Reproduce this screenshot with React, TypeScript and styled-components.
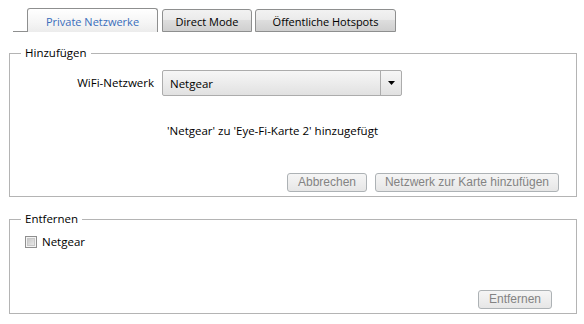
import React from "react";
import styled, { createGlobalStyle } from "styled-components";

const Global = createGlobalStyle`
  html, body { margin: 0; padding: 0; background: #ffffff; }
  body { width: 584px; height: 324px; overflow: hidden; font-family: "Open Sans", "Noto Sans", sans-serif; }
`;

const Page = styled.div`
  width: 584px;
  height: 324px;
  box-sizing: border-box;
  padding: 8px 7px 0 9px;
  display: flex;
  flex-direction: column;
  font-size: 11.5px;
  color: #000;
`;

const TabStrip = styled.div`
  display: flex;
  align-items: flex-end;
  height: 24px;
  padding-left: 4px;
  font-size: 11px;
`;

const TabLead = styled.div`
  width: 14px;
  height: 0;
  border-bottom: 1px solid #8e8f8f;
`;

const Tab = styled.div<{ $active?: boolean; $w: number }>`
  box-sizing: border-box;
  width: ${(p) => p.$w}px;
  height: ${(p) => (p.$active ? 24 : 23)}px;
  margin-right: ${(p) => (p.$active ? 4 : 3)}px;
  border: 1px solid #8e8f8f;
  border-bottom: ${(p) => (p.$active ? "none" : "1px solid #8e8f8f")};
  border-radius: 3px 3px 0 0;
  background: ${(p) =>
    p.$active
      ? "linear-gradient(#ffffff, #f5f5f5 60%, #ececec)"
      : "linear-gradient(#f2f2f2, #ebebeb 45%, #dddddd 50%, #cfcfcf)"};
  color: ${(p) => (p.$active ? "#3a6dbb" : "#000")};
  display: flex;
  align-items: center;
  justify-content: center;
  padding-top: ${(p) => (p.$active ? 2 : 1)}px;
  white-space: nowrap;
  overflow: hidden;
`;

const Group = styled.fieldset<{ $mt: number; $pb: number }>`
  margin: ${(p) => p.$mt}px 0 0 0;
  padding: 0 0 ${(p) => p.$pb}px 0;
  border: 1px solid #b4b4b4;
  min-width: 0;
  display: flex;
  flex-direction: column;
`;

const Legend = styled.legend`
  margin-left: 11px;
  padding: 0 4px;
  line-height: 16px;
  height: 16px;
`;

const FieldRow = styled.div`
  display: flex;
  align-items: center;
  margin-top: 9px;
  gap: 8px;
`;

const Label = styled.span`
  width: 144px;
  text-align: right;
  line-height: 16px;
`;

const Select = styled.div`
  box-sizing: border-box;
  width: 240px;
  height: 26px;
  border: 1px solid #acacac;
  border-radius: 2px;
  background: linear-gradient(#f6f6f6, #ececec 50%, #e1e1e1);
  display: flex;
  align-items: stretch;
`;

const SelectValue = styled.div`
  flex: 1;
  display: flex;
  align-items: center;
  padding-left: 7px;
  padding-top: 1px;
`;

const SelectArrow = styled.div`
  box-sizing: border-box;
  width: 21px;
  border-left: 1px solid #acacac;
  display: flex;
  align-items: center;
  justify-content: center;
`;

const Message = styled.div`
  margin-top: 27px;
  padding-left: 157px;
  line-height: 16px;
`;

const ButtonRow = styled.div<{ $mt: number; $pr: number }>`
  display: flex;
  justify-content: flex-end;
  gap: 8px;
  margin-top: ${(p) => p.$mt}px;
  padding-right: ${(p) => p.$pr}px;
`;

const Button = styled.button<{ $w: number }>`
  box-sizing: border-box;
  width: ${(p) => p.$w}px;
  height: 19px;
  padding: 0;
  border: 1px solid #adb2b5;
  border-radius: 3px;
  background: linear-gradient(#f5f5f5, #eeeeee 50%, #e6e6e6);
  color: #838383;
  font-family: "Liberation Sans", Arial, sans-serif;
  font-size: 12px;
  line-height: 17px;
`;

const CheckRow = styled.label`
  display: flex;
  align-items: center;
  gap: 5px;
  margin-top: 7px;
  padding-left: 15px;
  line-height: 16px;
`;

const Box = styled.span`
  box-sizing: border-box;
  width: 12px;
  height: 12px;
  border: 1px solid #8f8f8f;
  background: #f4f4f4;
  display: flex;
  padding: 1px;
`;

const BoxInner = styled.span`
  flex: 1;
  border: 1px solid #c8c8c8;
  background: linear-gradient(135deg, #c9c9c9, #e8e8e8);
`;

export default function App() {
  return (
    <>
      <Global />
      <Page>
        <TabStrip>
          <TabLead />
          <Tab $active $w={131}>Private Netzwerke</Tab>
          <Tab $w={90}>Direct Mode</Tab>
          <Tab $w={141}>Öffentliche Hotspots</Tab>
        </TabStrip>

        <Group $mt={13} $pb={4}>
          <Legend>Hinzufügen</Legend>
          <FieldRow>
            <Label>WiFi-Netzwerk</Label>
            <Select>
              <SelectValue>Netgear</SelectValue>
              <SelectArrow>
                <svg width="7" height="4" viewBox="0 0 7 4">
                  <path d="M0 0h7L3.5 4z" fill="#000" />
                </svg>
              </SelectArrow>
            </Select>
          </FieldRow>
          <Message>'Netgear' zu 'Eye-Fi-Karte 2' hinzugefügt</Message>
          <ButtonRow $mt={34} $pr={17}>
            <Button $w={80} disabled>Abbrechen</Button>
            <Button $w={184} disabled>Netzwerk zur Karte hinzufügen</Button>
          </ButtonRow>
        </Group>

        <Group $mt={14} $pb={4}>
          <Legend>Entfernen</Legend>
          <CheckRow>
            <Box><BoxInner /></Box>
            Netgear
          </CheckRow>
          <ButtonRow $mt={40} $pr={24}>
            <Button $w={74} disabled>Entfernen</Button>
          </ButtonRow>
        </Group>
      </Page>
    </>
  );
}
